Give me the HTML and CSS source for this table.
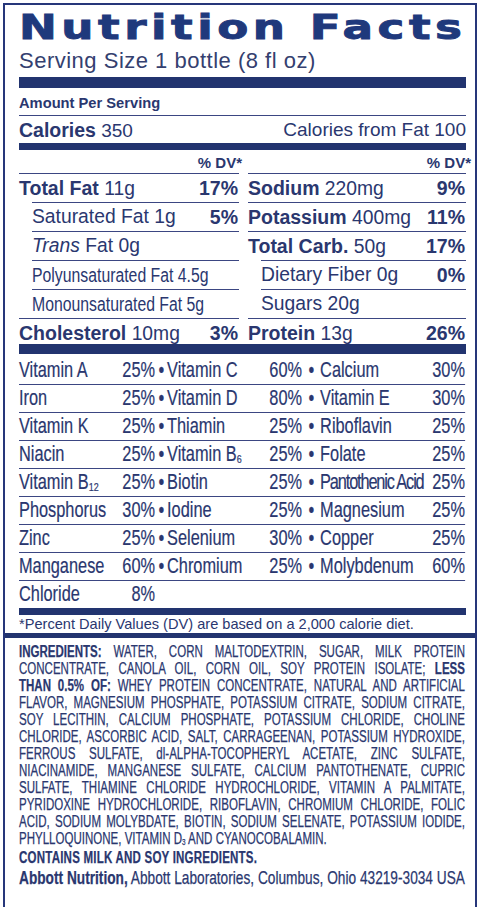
FILE: index.html
```html
<!DOCTYPE html>
<html lang="en">
<head>
<meta charset="utf-8">
<title>Nutrition Facts</title>
<link rel="stylesheet" href="styles.css">
</head>
<body>
<div class="label">
  <div class="facts">
    <div class="title"><span>Nutrition Facts</span></div>
    <div class="serving">Serving Size 1 bottle (8 fl oz)</div>
    <div class="bar bar-11"></div>
    <div class="amount">Amount Per Serving</div>
    <div class="calories">
      <span><b>Calories</b> 350</span>
      <span>Calories from Fat 100</span>
    </div>
    <div class="bar bar-7"></div>
    <div class="nutrients">
      <div class="ncol">
        <div class="dvhead">% DV*</div>
        <div class="nrow"><span><b>Total Fat</b> 11g</span><b>17%</b></div>
        <div class="nrow sub"><span>Saturated Fat 1g</span><b>5%</b></div>
        <div class="nrow sub"><span><i>Trans</i> Fat 0g</span></div>
        <div class="nrow sub"><span class="cond">Polyunsaturated Fat 4.5g</span></div>
        <div class="nrow sub"><span class="cond">Monounsaturated Fat 5g</span></div>
        <div class="nrow last"><span><b>Cholesterol</b> 10mg</span><b>3%</b></div>
      </div>
      <div class="ncol">
        <div class="dvhead">% DV*</div>
        <div class="nrow"><span><b>Sodium</b> 220mg</span><b>9%</b></div>
        <div class="nrow"><span><b>Potassium</b> 400mg</span><b>11%</b></div>
        <div class="nrow"><span><b>Total Carb.</b> 50g</span><b>17%</b></div>
        <div class="nrow sub"><span>Dietary Fiber 0g</span><b>0%</b></div>
        <div class="nrow sub"><span>Sugars 20g</span></div>
        <div class="nrow last"><span><b>Protein</b> 13g</span><b>26%</b></div>
      </div>
    </div>
    <div class="bar bar-10"></div>
    <div class="vitamins">
      <div class="vrow"><span>Vitamin A</span><span class="pct">25%</span><span class="dot">•</span><span>Vitamin C</span><span class="pct">60%</span><span class="dot">•</span><span>Calcium</span><span class="pct">30%</span></div>
      <div class="vrow"><span>Iron</span><span class="pct">25%</span><span class="dot">•</span><span>Vitamin D</span><span class="pct">80%</span><span class="dot">•</span><span>Vitamin E</span><span class="pct">30%</span></div>
      <div class="vrow"><span>Vitamin K</span><span class="pct">25%</span><span class="dot">•</span><span>Thiamin</span><span class="pct">25%</span><span class="dot">•</span><span>Riboflavin</span><span class="pct">25%</span></div>
      <div class="vrow"><span>Niacin</span><span class="pct">25%</span><span class="dot">•</span><span>Vitamin B<sub>6</sub></span><span class="pct">25%</span><span class="dot">•</span><span>Folate</span><span class="pct">25%</span></div>
      <div class="vrow"><span>Vitamin B<sub>12</sub></span><span class="pct">25%</span><span class="dot">•</span><span>Biotin</span><span class="pct">25%</span><span class="dot">•</span><span class="tight">Pantothenic Acid</span><span class="pct">25%</span></div>
      <div class="vrow"><span>Phosphorus</span><span class="pct">30%</span><span class="dot">•</span><span>Iodine</span><span class="pct">25%</span><span class="dot">•</span><span>Magnesium</span><span class="pct">25%</span></div>
      <div class="vrow"><span>Zinc</span><span class="pct">25%</span><span class="dot">•</span><span>Selenium</span><span class="pct">30%</span><span class="dot">•</span><span>Copper</span><span class="pct">25%</span></div>
      <div class="vrow"><span>Manganese</span><span class="pct">60%</span><span class="dot">•</span><span>Chromium</span><span class="pct">25%</span><span class="dot">•</span><span>Molybdenum</span><span class="pct">60%</span></div>
      <div class="vrow last"><span>Chloride</span><span class="pct">8%</span></div>
    </div>
    <div class="bar bar-7"></div>
    <div class="footnote">*Percent Daily Values (DV) are based on a 2,000 calorie diet.</div>
  </div>
  <div class="ingredients">
    <div class="itext">
      <div class="iline"><b>INGREDIENTS:</b> WATER, CORN MALTODEXTRIN, SUGAR, MILK PROTEIN</div>
      <div class="iline">CONCENTRATE, CANOLA OIL, CORN OIL, SOY PROTEIN ISOLATE; <b>LESS</b></div>
      <div class="iline"><b>THAN 0.5% OF:</b> WHEY PROTEIN CONCENTRATE, NATURAL AND ARTIFICIAL</div>
      <div class="iline">FLAVOR, MAGNESIUM PHOSPHATE, POTASSIUM CITRATE, SODIUM CITRATE,</div>
      <div class="iline">SOY LECITHIN, CALCIUM PHOSPHATE, POTASSIUM CHLORIDE, CHOLINE</div>
      <div class="iline">CHLORIDE, ASCORBIC ACID, SALT, CARRAGEENAN, POTASSIUM HYDROXIDE,</div>
      <div class="iline">FERROUS SULFATE, dl-ALPHA-TOCOPHERYL ACETATE, ZINC SULFATE,</div>
      <div class="iline">NIACINAMIDE, MANGANESE SULFATE, CALCIUM PANTOTHENATE, CUPRIC</div>
      <div class="iline">SULFATE, THIAMINE CHLORIDE HYDROCHLORIDE, VITAMIN A PALMITATE,</div>
      <div class="iline">PYRIDOXINE HYDROCHLORIDE, RIBOFLAVIN, CHROMIUM CHLORIDE, FOLIC</div>
      <div class="iline">ACID, SODIUM MOLYBDATE, BIOTIN, SODIUM SELENATE, POTASSIUM IODIDE,</div>
      <div class="iline end">PHYLLOQUINONE, VITAMIN D<sub>3</sub> AND CYANOCOBALAMIN.</div>
      <div class="contains">CONTAINS MILK AND SOY INGREDIENTS.</div>
      <div class="maker"><b>Abbott Nutrition,</b> Abbott Laboratories, Columbus, Ohio 43219-3034 USA</div>
    </div>
  </div>
</div>
</body>
</html>
```
FILE: styles.css
```css
* {
  box-sizing: border-box;
  margin: 0;
  padding: 0;
}

body {
  margin: 0;
  background: #ffffff;
  color: #2a376f;
  font-family: "Liberation Sans", Arial, sans-serif;
}

.label {
  margin: 3px 0 0 3px;
  width: 474px;
  height: 904px;
  border: 2px solid #26367a;
  border-bottom: none;
}

.facts {
  padding: 0 9px 0 14px;
}

.title {
  font-family: "DejaVu Sans", sans-serif;
  font-weight: 700;
  font-size: 34px;
  line-height: 44px;
  height: 44px;
  white-space: nowrap;
  color: #1f397c;
}

.title span {
  display: inline-block;
  transform: scaleX(1.33);
  transform-origin: left center;
  letter-spacing: 3.4px;
  -webkit-text-stroke: 0.9px #1f397c;
}

.serving {
  font-size: 22px;
  line-height: 24px;
  letter-spacing: 0.5px;
  color: #34406f;
}

.bar {
  background: #22346f;
}

.bar-11 {
  margin-top: 4px;
  height: 11px;
}

.bar-10 {
  height: 10px;
}

.bar-7 {
  height: 7px;
}

.amount {
  font-weight: 700;
  font-size: 14.7px;
  line-height: 18px;
  padding: 6px 0 3px;
  border-bottom: 1px solid #3b4682;
}

.calories {
  display: flex;
  justify-content: space-between;
  font-size: 19px;
  line-height: 22px;
  padding: 3px 0 1px;
}

.calories b {
  font-size: 19.5px;
}

.nutrients {
  display: grid;
  grid-template-columns: 220px 1fr;
  column-gap: 9px;
}

.dvhead {
  text-align: right;
  font-weight: 700;
  font-size: 15px;
  line-height: 18px;
  padding: 4px 0 1px;
  margin-right: -3px;
}

.ncol + .ncol .dvhead {
  margin-right: -5px;
}

.nrow {
  display: flex;
  justify-content: space-between;
  border-top: 1px solid #3b4682;
  font-size: 19.3px;
  line-height: 28px;
  height: 29px;
  padding-right: 1px;
  white-space: nowrap;
}

.nrow.sub {
  margin-left: 13px;
}

.nrow .cond {
  display: inline-block;
  font-size: 20px;
  transform: scaleX(0.79);
  transform-origin: left center;
}

.nrow.last {
  height: 26px;
  line-height: 28px;
}

.nrow b {
  font-size: 19.5px;
}

.vitamins {
  width: 586.8px;
  padding-top: 3px;
  font-size: 21.5px;
  transform: scaleX(0.76);
  transform-origin: left top;
  -webkit-text-stroke: 0.2px #2a376f;
}

.vrow {
  display: grid;
  grid-template-columns: 131.6px 47.4px 15.8px 130.3px 47.4px 23.7px 1fr 48.7px;
  line-height: 27px;
  height: 28px;
  border-bottom: 1px solid #3b4682;
  white-space: nowrap;
}

.vrow.last {
  border-bottom: none;
  height: 27px;
}

.vrow .pct {
  text-align: right;
}

.vrow .dot {
  text-align: center;
  padding-left: 1px;
}

.vrow .tight {
  letter-spacing: -1.5px;
}

sub {
  font-size: 0.55em;
  line-height: 0;
  vertical-align: -0.15em;
}

.footnote {
  font-size: 14.6px;
  line-height: 17px;
  padding-top: 1px;
  white-space: nowrap;
}

.ingredients {
  border-top: 5px solid #22346f;
  padding: 5px 9px 0 14px;
}

.itext {
  width: 619.4px;
  font-size: 16px;
  line-height: 17px;
  transform: scaleX(0.72);
  transform-origin: left top;
  -webkit-text-stroke: 0.25px #2a376f;
}

.iline {
  text-align: justify;
  text-align-last: justify;
  white-space: nowrap;
}

.iline.end {
  text-align-last: left;
}

.contains {
  font-weight: 700;
  margin-top: 2px;
  letter-spacing: 0.3px;
}

.maker {
  font-size: 19px;
  line-height: 20px;
  margin-top: 2px;
  text-align-last: justify;
  white-space: nowrap;
}
```
